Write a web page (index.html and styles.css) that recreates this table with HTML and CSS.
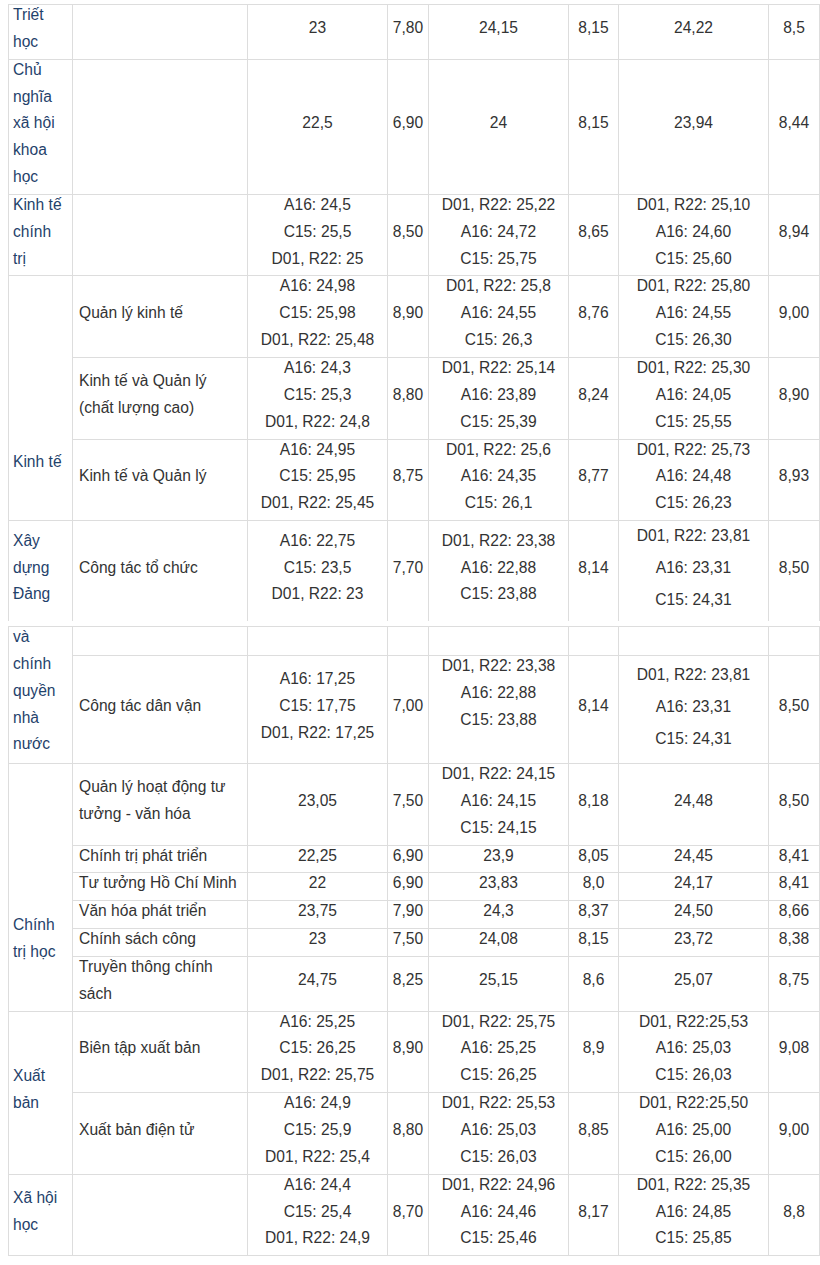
FILE: index.html
```html
<!DOCTYPE html>
<html lang="vi">
<head>
<meta charset="utf-8">
<title>Điểm chuẩn</title>
<link rel="stylesheet" href="styles.css">
</head>
<body>
<div class="page">
<table class="grid">
<colgroup>
<col class="w-major"><col class="w-minor"><col class="w-score"><col class="w-pt"><col class="w-score"><col class="w-pt2"><col class="w-score2"><col class="w-pt3">
</colgroup>
<tbody>
<tr>
<td class="major"><div class="t">Triết<br>học</div></td>
<td></td>
<td><div class="t">23</div></td>
<td><div class="t">7,80</div></td>
<td><div class="t">24,15</div></td>
<td><div class="t">8,15</div></td>
<td><div class="t">24,22</div></td>
<td><div class="t">8,5</div></td>
</tr>
<tr>
<td class="major"><div class="t">Chủ<br>nghĩa<br>xã hội<br>khoa<br>học</div></td>
<td></td>
<td><div class="t">22,5</div></td>
<td><div class="t">6,90</div></td>
<td><div class="t">24</div></td>
<td><div class="t">8,15</div></td>
<td><div class="t">23,94</div></td>
<td><div class="t">8,44</div></td>
</tr>
<tr>
<td class="major"><div class="t">Kinh tế<br>chính<br>trị</div></td>
<td></td>
<td><div class="t">A16: 24,5<br>C15: 25,5<br>D01, R22: 25</div></td>
<td><div class="t">8,50</div></td>
<td><div class="t">D01, R22: 25,22<br>A16: 24,72<br>C15: 25,75</div></td>
<td><div class="t">8,65</div></td>
<td><div class="t">D01, R22: 25,10<br>A16: 24,60<br>C15: 25,60</div></td>
<td><div class="t">8,94</div></td>
</tr>
<tr>
<td class="major low" rowspan="3"><div class="t">Kinh tế</div></td>
<td class="minor"><div class="t">Quản lý kinh tế</div></td>
<td><div class="t">A16: 24,98<br>C15: 25,98<br>D01, R22: 25,48</div></td>
<td><div class="t">8,90</div></td>
<td><div class="t">D01, R22: 25,8<br>A16: 24,55<br>C15: 26,3</div></td>
<td><div class="t">8,76</div></td>
<td><div class="t">D01, R22: 25,80<br>A16: 24,55<br>C15: 26,30</div></td>
<td><div class="t">9,00</div></td>
</tr>
<tr>
<td class="minor"><div class="t">Kinh tế và Quản lý<br>(chất lượng cao)</div></td>
<td><div class="t">A16: 24,3<br>C15: 25,3<br>D01, R22: 24,8</div></td>
<td><div class="t">8,80</div></td>
<td><div class="t">D01, R22: 25,14<br>A16: 23,89<br>C15: 25,39</div></td>
<td><div class="t">8,24</div></td>
<td><div class="t">D01, R22: 25,30<br>A16: 24,05<br>C15: 25,55</div></td>
<td><div class="t">8,90</div></td>
</tr>
<tr>
<td class="minor"><div class="t">Kinh tế và Quản lý</div></td>
<td><div class="t">A16: 24,95<br>C15: 25,95<br>D01, R22: 25,45</div></td>
<td><div class="t">8,75</div></td>
<td><div class="t">D01, R22: 25,6<br>A16: 24,35<br>C15: 26,1</div></td>
<td><div class="t">8,77</div></td>
<td><div class="t">D01, R22: 25,73<br>A16: 24,48<br>C15: 26,23</div></td>
<td><div class="t">8,93</div></td>
</tr>
<tr class="cut">
<td class="major"><div class="t">Xây<br>dựng<br>Đảng</div></td>
<td class="minor"><div class="t">Công tác tổ chức</div></td>
<td><div class="t">A16: 22,75<br>C15: 23,5<br>D01, R22: 23</div></td>
<td><div class="t">7,70</div></td>
<td><div class="t">D01, R22: 23,38<br>A16: 22,88<br>C15: 23,88</div></td>
<td><div class="t">8,14</div></td>
<td><div class="t wide">D01, R22: 23,81<br>A16: 23,31<br>C15: 24,31</div></td>
<td><div class="t">8,50</div></td>
</tr>
</tbody>
</table>

<table class="grid second">
<colgroup>
<col class="w-major"><col class="w-minor"><col class="w-score"><col class="w-pt"><col class="w-score"><col class="w-pt2"><col class="w-score2"><col class="w-pt3">
</colgroup>
<tbody>
<tr class="stub">
<td class="major top" rowspan="2"><div class="t">và<br>chính<br>quyền<br>nhà<br>nước</div></td>
<td></td><td></td><td></td><td></td><td></td><td></td><td></td>
</tr>
<tr class="tall">
<td class="minor"><div class="t">Công tác dân vận</div></td>
<td><div class="t">A16: 17,25<br>C15: 17,75<br>D01, R22: 17,25</div></td>
<td><div class="t">7,00</div></td>
<td class="top"><div class="t">D01, R22: 23,38<br>A16: 22,88<br>C15: 23,88</div></td>
<td><div class="t">8,14</div></td>
<td><div class="t wide">D01, R22: 23,81<br>A16: 23,31<br>C15: 24,31</div></td>
<td><div class="t">8,50</div></td>
</tr>
<tr>
<td class="major low2" rowspan="6"><div class="t">Chính<br>trị học</div></td>
<td class="minor"><div class="t">Quản lý hoạt động tư<br>tưởng - văn hóa</div></td>
<td><div class="t">23,05</div></td>
<td><div class="t">7,50</div></td>
<td><div class="t">D01, R22: 24,15<br>A16: 24,15<br>C15: 24,15</div></td>
<td><div class="t">8,18</div></td>
<td><div class="t">24,48</div></td>
<td><div class="t">8,50</div></td>
</tr>
<tr>
<td class="minor"><div class="t">Chính trị phát triển</div></td>
<td><div class="t">22,25</div></td>
<td><div class="t">6,90</div></td>
<td><div class="t">23,9</div></td>
<td><div class="t">8,05</div></td>
<td><div class="t">24,45</div></td>
<td><div class="t">8,41</div></td>
</tr>
<tr>
<td class="minor"><div class="t">Tư tưởng Hồ Chí Minh</div></td>
<td><div class="t">22</div></td>
<td><div class="t">6,90</div></td>
<td><div class="t">23,83</div></td>
<td><div class="t">8,0</div></td>
<td><div class="t">24,17</div></td>
<td><div class="t">8,41</div></td>
</tr>
<tr>
<td class="minor"><div class="t">Văn hóa phát triển</div></td>
<td><div class="t">23,75</div></td>
<td><div class="t">7,90</div></td>
<td><div class="t">24,3</div></td>
<td><div class="t">8,37</div></td>
<td><div class="t">24,50</div></td>
<td><div class="t">8,66</div></td>
</tr>
<tr>
<td class="minor"><div class="t">Chính sách công</div></td>
<td><div class="t">23</div></td>
<td><div class="t">7,50</div></td>
<td><div class="t">24,08</div></td>
<td><div class="t">8,15</div></td>
<td><div class="t">23,72</div></td>
<td><div class="t">8,38</div></td>
</tr>
<tr>
<td class="minor"><div class="t">Truyền thông chính<br>sách</div></td>
<td><div class="t">24,75</div></td>
<td><div class="t">8,25</div></td>
<td><div class="t">25,15</div></td>
<td><div class="t">8,6</div></td>
<td><div class="t">25,07</div></td>
<td><div class="t">8,75</div></td>
</tr>
<tr>
<td class="major" rowspan="2"><div class="t">Xuất<br>bản</div></td>
<td class="minor"><div class="t">Biên tập xuất bản</div></td>
<td><div class="t">A16: 25,25<br>C15: 26,25<br>D01, R22: 25,75</div></td>
<td><div class="t">8,90</div></td>
<td><div class="t">D01, R22: 25,75<br>A16: 25,25<br>C15: 26,25</div></td>
<td><div class="t">8,9</div></td>
<td><div class="t">D01, R22:25,53<br>A16: 25,03<br>C15: 26,03</div></td>
<td><div class="t">9,08</div></td>
</tr>
<tr>
<td class="minor"><div class="t">Xuất bản điện tử</div></td>
<td><div class="t">A16: 24,9<br>C15: 25,9<br>D01, R22: 25,4</div></td>
<td><div class="t">8,80</div></td>
<td><div class="t">D01, R22: 25,53<br>A16: 25,03<br>C15: 26,03</div></td>
<td><div class="t">8,85</div></td>
<td><div class="t">D01, R22:25,50<br>A16: 25,00<br>C15: 26,00</div></td>
<td><div class="t">9,00</div></td>
</tr>
<tr>
<td class="major"><div class="t">Xã hội<br>học</div></td>
<td></td>
<td><div class="t">A16: 24,4<br>C15: 25,4<br>D01, R22: 24,9</div></td>
<td><div class="t">8,70</div></td>
<td><div class="t">D01, R22: 24,96<br>A16: 24,46<br>C15: 25,46</div></td>
<td><div class="t">8,17</div></td>
<td><div class="t">D01, R22: 25,35<br>A16: 24,85<br>C15: 25,85</div></td>
<td><div class="t">8,8</div></td>
</tr>
</tbody>
</table>
</div>
</body>
</html>
```

FILE: styles.css
```css
html, body {
  margin: 0;
  padding: 0;
  background: #ffffff;
}

.page {
  padding: 4px 0 0 8px;
}

.grid {
  border-collapse: separate;
  border-spacing: 0;
  table-layout: fixed;
  width: 812px;
  border-top: 1px solid #dddddd;
  border-left: 1px solid #dddddd;
}

.grid.second {
  margin-top: 5px;
}

.w-major { width: 64px; }
.w-minor { width: 175px; }
.w-score { width: 140px; }
.w-pt { width: 41px; }
.w-pt2 { width: 50px; }
.w-score2 { width: 150px; }
.w-pt3 { width: 51px; }

.grid td {
  border-right: 1px solid #dddddd;
  border-bottom: 1px solid #dddddd;
  padding: 0 2px;
  font-family: "Liberation Sans", Arial, sans-serif;
  font-size: 15.6px;
  line-height: 26.85px;
  color: #333333;
  text-align: center;
  vertical-align: middle;
  white-space: nowrap;
  overflow: hidden;
}

.t {
  margin: -3px 0 3px;
}

.t.wide {
  line-height: 32px;
}

.grid td.major {
  text-align: left;
  padding: 0 4px;
  color: #1f426b;
}

.grid td.minor {
  text-align: left;
  padding: 0 6px;
}

.grid td.top {
  vertical-align: top;
}

.grid td.low {
  vertical-align: bottom;
  padding-bottom: 41px;
}

.grid td.low2 {
  vertical-align: bottom;
  padding-bottom: 42px;
}

.grid tr.cut {
  height: 100px;
}

.grid tr.cut td {
  border-bottom: none;
}

.grid tr.stub {
  height: 29px;
}

.grid tr.tall {
  height: 108px;
}
```
